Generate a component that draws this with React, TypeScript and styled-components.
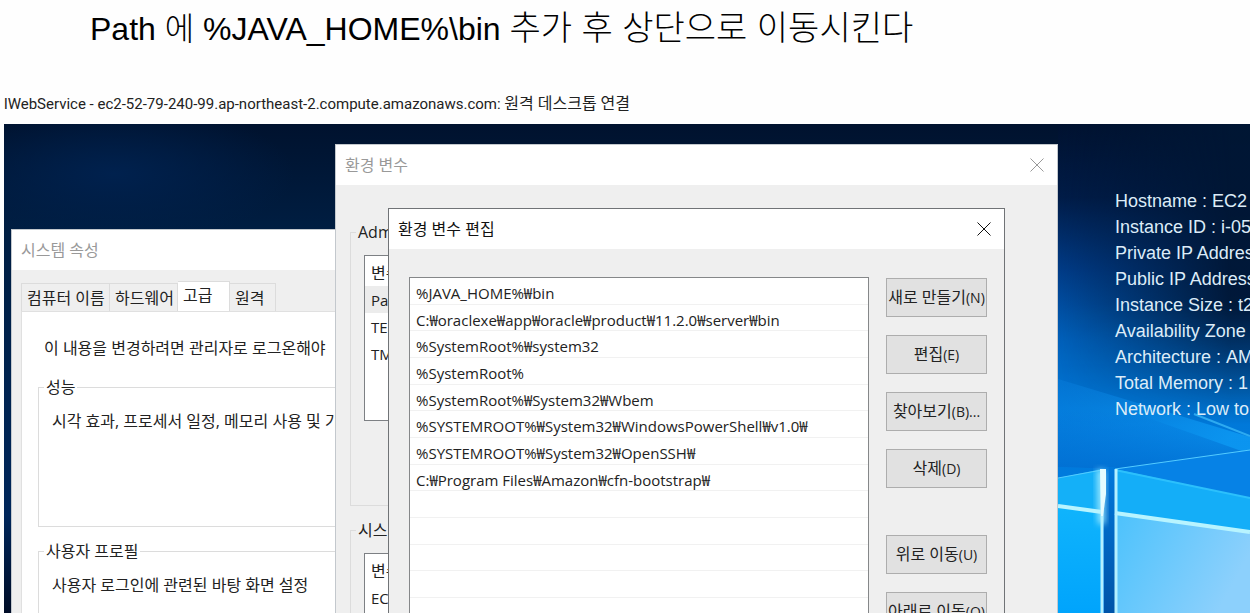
import React from "react";
import styled, { createGlobalStyle } from "styled-components";

const GlobalStyle = createGlobalStyle`
  *, *::before, *::after { box-sizing: border-box; }
  html, body { margin: 0; }
  body {
    background: #fefefe;
    color: #222;
    font: 400 16px/24px "Open Sans", "Noto Sans CJK KR", sans-serif;
    overflow: hidden;
  }
  button { font: inherit; color: inherit; padding: 0; }
`;

const Page = styled.main`
  display: flex;
  flex-direction: column;
  height: 100vh;
`;

const Heading = styled.h1`
  margin: 0;
  padding: 4px 90px 0;
  height: 92px;
  font: 300 32px/48px "Liberation Sans", "Noto Sans CJK KR", sans-serif;
  color: #000;
  white-space: nowrap;

  span { font-size: 34px; }
`;

const Caption = styled.div`
  height: 32px;
  padding-left: 4px;
  font: 15px/24px Roboto, "Noto Sans CJK KR", sans-serif;
  white-space: nowrap;

  span { font-size: 16px; }
`;

const Desktop = styled.section`
  position: relative;
  flex: 1;
  min-height: 0;
  margin-left: 4px;
  overflow: hidden;
  background: #001a3e;
`;

const Wallpaper = styled.svg`
  position: absolute;
  inset: 0;
  width: 100%;
  height: 100%;
`;

const HostInfo = styled.dl`
  position: absolute;
  left: 1111px;
  top: 64px;
  margin: 0;
  font: 18px/26px "Liberation Sans", sans-serif;
  color: #dcecf8;
  white-space: nowrap;
`;

const HostLine = styled.div`
  display: flex;
  gap: 5px;

  dt::after { content: " :"; }
  dd { margin: 0; }
`;

const Window = styled.section<{ $x: number; $y: number; $w: number; $active?: boolean }>`
  position: absolute;
  left: ${(p) => p.$x}px;
  top: ${(p) => p.$y}px;
  bottom: 0;
  width: ${(p) => p.$w}px;
  display: flex;
  flex-direction: column;
  overflow: hidden;
  background: #efefef;
  border: 1px solid ${(p) => (p.$active ? "#707376" : "#c3c8cd")};
  border-bottom: 0;
`;

const TitleBar = styled.header<{ $active?: boolean }>`
  display: flex;
  flex: none;
  align-items: center;
  justify-content: space-between;
  height: 40px;
  padding: 0 12px 0 9px;
  background: #fff;
  color: ${(p) => (p.$active ? "#111" : "#999")};

  h2 { margin: 0; font: inherit; }
`;

const CloseButton = styled.button`
  display: flex;
  border: 0;
  background: none;
`;

const Tabs = styled.div`
  display: flex;
  flex: none;
  align-items: flex-end;
  height: 41px;
  padding-left: 9px;
`;

const Tab = styled.button<{ $w: number; $active?: boolean }>`
  width: ${(p) => p.$w}px;
  height: ${(p) => (p.$active ? 30 : 28)}px;
  padding: 0 0 ${(p) => (p.$active ? 3 : 0)}px 5px;
  border: 1px solid #dcdcdc;
  border-width: 1px 1px 0 0;
  background: ${(p) => (p.$active ? "#fff" : "#efefef")};
  text-align: left;
  white-space: nowrap;

  &:first-child { border-left-width: 1px; }
`;

const TabPanel = styled.div`
  flex: 1;
  margin-left: 9px;
  padding: 24px 16px 0;
  border: 1px solid #e0e0e0;
  background: #fff;
  white-space: nowrap;
`;

const Note = styled.p`
  margin: 0 6px 15px;
`;

const Group = styled.fieldset<{ $h: number }>`
  min-width: 0;
  height: ${(p) => p.$h}px;
  margin: 0 0 12px;
  padding: 10px 13px 0;
  border: 1px solid #dcdcdc;
  white-space: nowrap;

  legend {
    margin-left: -8px;
    padding: 0 2px;
  }
  p { margin: 0; }
`;

const VariableArea = styled.div`
  padding: 35px 60px 0 14px;
`;

const VariableTable = styled.table`
  display: block;
  height: 166px;
  margin-top: 1px;
  border: 1px solid #7d8084;
  background: #fff;
  border-spacing: 0;
  font-size: 15px;

  th, td {
    height: 27px;
    padding: 0 6px;
    font-weight: 400;
    text-align: left;
    line-height: 24px;
  }
  th {
    height: 30px;
    padding-top: 4px;
    font-size: 16px;
  }
`;

const VariableRow = styled.tr<{ $selected?: boolean }>`
  background: ${(p) => (p.$selected ? "#ececec" : "#fff")};
`;

const Editor = styled.div`
  display: flex;
  flex: 1;
  gap: 17px;
  padding: 28px 17px 0 20px;
`;

const PathList = styled.ul`
  flex: 1;
  display: grid;
  grid-auto-rows: 27px 26px 27px;
  align-content: start;
  margin: 0;
  padding: 0;
  border: 1px solid #858789;
  background: #fff;
  font-size: 15px;
  list-style: none;
`;

const PathItem = styled.li`
  padding: 5px 0 0 6px;
  border-bottom: 1px solid #f1f1f1;
  line-height: 21px;
  white-space: nowrap;
`;

const Actions = styled.div`
  display: flex;
  flex: none;
  flex-direction: column;
  gap: 18px;
  width: 101px;
  padding-top: 1px;
`;

const ActionButton = styled.button<{ $apart?: boolean }>`
  flex: none;
  height: 39px;
  margin-top: ${(p) => (p.$apart ? 29 : 0)}px;
  border: 1px solid #adadad;
  background: #e1e1e1;
  white-space: nowrap;
`;

const Key = styled.span`
  font-size: 14px;
`;

const CloseIcon = () => (
  <svg width="16" height="16" viewBox="0 0 16 16" fill="none" stroke="currentColor">
    <path d="M1.5 1.5l13 13M14.5 1.5l-13 13" />
  </svg>
);

const hostInfo = [
  ["Hostname", "EC2"],
  ["Instance ID", "i-05"],
  ["Private IP Address", ""],
  ["Public IP Address", ""],
  ["Instance Size", "t2"],
  ["Availability Zone", ""],
  ["Architecture", "AM"],
  ["Total Memory", "1"],
  ["Network", "Low to"],
];

const tabs = [
  { label: "컴퓨터 이름", width: 89 },
  { label: "하드웨어", width: 68 },
  { label: "고급", width: 52, active: true },
  { label: "원격", width: 46 },
];

const paths = [
  "%JAVA_HOME%₩bin",
  "C:₩oraclexe₩app₩oracle₩product₩11.2.0₩server₩bin",
  "%SystemRoot%₩system32",
  "%SystemRoot%",
  "%SystemRoot%₩System32₩Wbem",
  "%SYSTEMROOT%₩System32₩WindowsPowerShell₩v1.0₩",
  "%SYSTEMROOT%₩System32₩OpenSSH₩",
  "C:₩Program Files₩Amazon₩cfn-bootstrap₩",
  "",
  "",
  "",
  "",
];

const actions = [
  { label: "새로 만들기", key: "(N)" },
  { label: "편집", key: "(E)" },
  { label: "찾아보기", key: "(B)..." },
  { label: "삭제", key: "(D)" },
  { label: "위로 이동", key: "(U)", apart: true },
  { label: "아래로 이동", key: "(O)" },
];

function DesktopWallpaper() {
  return (
    <Wallpaper viewBox="0 0 1246 489" preserveAspectRatio="none" aria-hidden="true">
      <defs>
        <linearGradient id="night" x1="0" y1="0" x2="0" y2="1">
          <stop offset="0" stopColor="#00122e" />
          <stop offset="0.22" stopColor="#001e42" />
          <stop offset="0.8" stopColor="#00265a" />
          <stop offset="1" stopColor="#000c26" />
        </linearGradient>
        <radialGradient id="topGlow" cx="0.5" cy="0.5" r="0.5">
          <stop offset="0" stopColor="#00214e" />
          <stop offset="1" stopColor="#00214e" stopOpacity="0" />
        </radialGradient>
        <linearGradient id="sky" x1="0" y1="0" x2="0" y2="1">
          <stop offset="0" stopColor="#001230" />
          <stop offset="0.15" stopColor="#001c48" />
          <stop offset="0.3" stopColor="#003c88" />
          <stop offset="0.44" stopColor="#0060ba" />
          <stop offset="0.58" stopColor="#0078d8" />
          <stop offset="1" stopColor="#0080e8" />
        </linearGradient>
        <linearGradient id="shade" x1="0" y1="0" x2="1" y2="0">
          <stop offset="0" stopColor="#001634" stopOpacity="0" />
          <stop offset="0.9" stopColor="#001634" stopOpacity="0.95" />
        </linearGradient>
        <linearGradient id="shadeFade" x1="0" y1="0" x2="0" y2="1">
          <stop offset="0.6" stopColor="#fff" />
          <stop offset="1" stopColor="#000" />
        </linearGradient>
        <mask id="shadeMask">
          <rect x="1054" width="192" height="300" fill="url(#shadeFade)" />
        </mask>
        <linearGradient id="beam" x1="0" y1="0" x2="1" y2="0.4">
          <stop offset="0" stopColor="#0a80e0" stopOpacity="0.5" />
          <stop offset="1" stopColor="#10a0f8" />
        </linearGradient>
        <linearGradient id="floor" x1="0" y1="0" x2="0" y2="1">
          <stop offset="0.3" stopColor="#006cd0" stopOpacity="0" />
          <stop offset="1" stopColor="#006cd0" stopOpacity="0.8" />
        </linearGradient>
        <linearGradient id="paneLeft" x1="0" y1="0" x2="0" y2="1">
          <stop offset="0" stopColor="#10b4fc" />
          <stop offset="1" stopColor="#00a4fc" />
        </linearGradient>
        <linearGradient id="paneRight" x1="0" y1="0" x2="1" y2="0.4">
          <stop offset="0" stopColor="#4cc2fc" />
          <stop offset="1" stopColor="#8cd0fc" />
        </linearGradient>
        <linearGradient id="post" x1="0" y1="0" x2="0" y2="1">
          <stop offset="0" stopColor="#0078dc" />
          <stop offset="1" stopColor="#0054a8" />
        </linearGradient>
        <filter id="glow" x="-50%" y="-10%" width="200%" height="120%" filterUnits="objectBoundingBox">
          <feGaussianBlur stdDeviation="3" />
        </filter>
      </defs>
      <rect width="1246" height="489" fill="url(#night)" />
      <ellipse cx="110" cy="50" rx="180" ry="70" fill="url(#topGlow)" />
      <rect x="1054" width="192" height="489" fill="url(#sky)" />
      <rect x="1054" width="192" height="300" fill="url(#shade)" mask="url(#shadeMask)" />
      <path d="M1054 255L1246 313V327L1111 345L1054 343Z" fill="url(#beam)" opacity="0.7" />
      <path d="M1054 262L1246 330L1111 345L1054 343Z" fill="url(#floor)" />
      <path d="M1190 290L1246 312" stroke="#40c0fc" strokeWidth="2" opacity="0.7" />
      <path d="M1111 345L1246 326V374Z" fill="#0682e6" />
      <path d="M1054 354L1098 345V387L1054 382Z" fill="#14b0f8" />
      <path d="M1054 382L1098 387V489H1054Z" fill="url(#paneLeft)" />
      <path d="M1111 345L1246 374V409L1111 390Z" fill="#14aef8" />
      <path d="M1111 390L1246 409V489H1111Z" fill="url(#paneRight)" />
      <path d="M1100 343H1111V489H1100Z" fill="url(#post)" />
      <path d="M1054 354L1098 346M1111 345L1246 326" stroke="#54ccff" strokeWidth="1" />
      <path d="M1111 346L1246 374" stroke="#2cc0fc" strokeWidth="2" />
      <path d="M1093 346H1101V400H1094Z" fill="#9ce8ff" filter="url(#glow)" />
      <path d="M1054 382L1098 388M1111 389L1246 408" stroke="#b8f4ff" strokeWidth="4" />
      <path d="M1098 345V489M1112 345V489" stroke="#b4f0ff" strokeWidth="3" />
      <path d="M1096 345H1102V370L1099 392H1097Z" fill="#e4fcff" />
    </Wallpaper>
  );
}

function VariableGroup(props: { legend: string; height: number; rows: string[]; selected?: string }) {
  return (
    <Group $h={props.height}>
      <legend>{props.legend}</legend>
      <VariableTable>
        <thead>
          <tr><th>변수</th></tr>
        </thead>
        <tbody>
          {props.rows.map((name) => (
            <VariableRow key={name} $selected={name === props.selected}>
              <td>{name}</td>
            </VariableRow>
          ))}
        </tbody>
      </VariableTable>
    </Group>
  );
}

export default function App() {
  return (
    <>
      <GlobalStyle />
      <Page>
        <Heading>Path 에 %JAVA_HOME%\bin <span>추가 후 상단으로 이동시킨다</span></Heading>
        <Caption>
          lWebService - ec2-52-79-240-99.ap-northeast-2.compute.amazonaws.com: <span>원격 데스크톱 연결</span>
        </Caption>
        <Desktop>
          <DesktopWallpaper />
          <HostInfo>
            {hostInfo.map(([name, value]) => (
              <HostLine key={name}>
                <dt>{name}</dt>
                <dd>{value}</dd>
              </HostLine>
            ))}
          </HostInfo>

          <Window $x={7} $y={105} $w={420}>
            <TitleBar><h2>시스템 속성</h2></TitleBar>
            <Tabs role="tablist">
              {tabs.map((tab) => (
                <Tab key={tab.label} role="tab" aria-selected={!!tab.active} $w={tab.width} $active={tab.active}>
                  {tab.label}
                </Tab>
              ))}
            </Tabs>
            <TabPanel role="tabpanel">
              <Note>이 내용을 변경하려면 관리자로 로그온해야</Note>
              <Group $h={152}>
                <legend>성능</legend>
                <p>시각 효과, 프로세서 일정, 메모리 사용 및 가</p>
              </Group>
              <Group $h={152}>
                <legend>사용자 프로필</legend>
                <p>사용자 로그인에 관련된 바탕 화면 설정</p>
              </Group>
            </TabPanel>
          </Window>

          <Window $x={331} $y={20} $w={723}>
            <TitleBar>
              <h2>환경 변수</h2>
              <CloseButton aria-label="닫기"><CloseIcon /></CloseButton>
            </TitleBar>
            <VariableArea>
              <VariableGroup legend="Adm" height={286} rows={["Path", "TEMP", "TMP"]} selected="Path" />
              <VariableGroup legend="시스" height={286} rows={["EC2"]} />
            </VariableArea>
          </Window>

          <Window $x={384} $y={84} $w={617} $active>
            <TitleBar $active>
              <h2>환경 변수 편집</h2>
              <CloseButton aria-label="닫기"><CloseIcon /></CloseButton>
            </TitleBar>
            <Editor>
              <PathList>
                {paths.map((path, i) => (
                  <PathItem key={i}>{path}</PathItem>
                ))}
              </PathList>
              <Actions>
                {actions.map((action) => (
                  <ActionButton key={action.label} $apart={action.apart}>
                    {action.label}<Key>{action.key}</Key>
                  </ActionButton>
                ))}
              </Actions>
            </Editor>
          </Window>
        </Desktop>
      </Page>
    </>
  );
}
